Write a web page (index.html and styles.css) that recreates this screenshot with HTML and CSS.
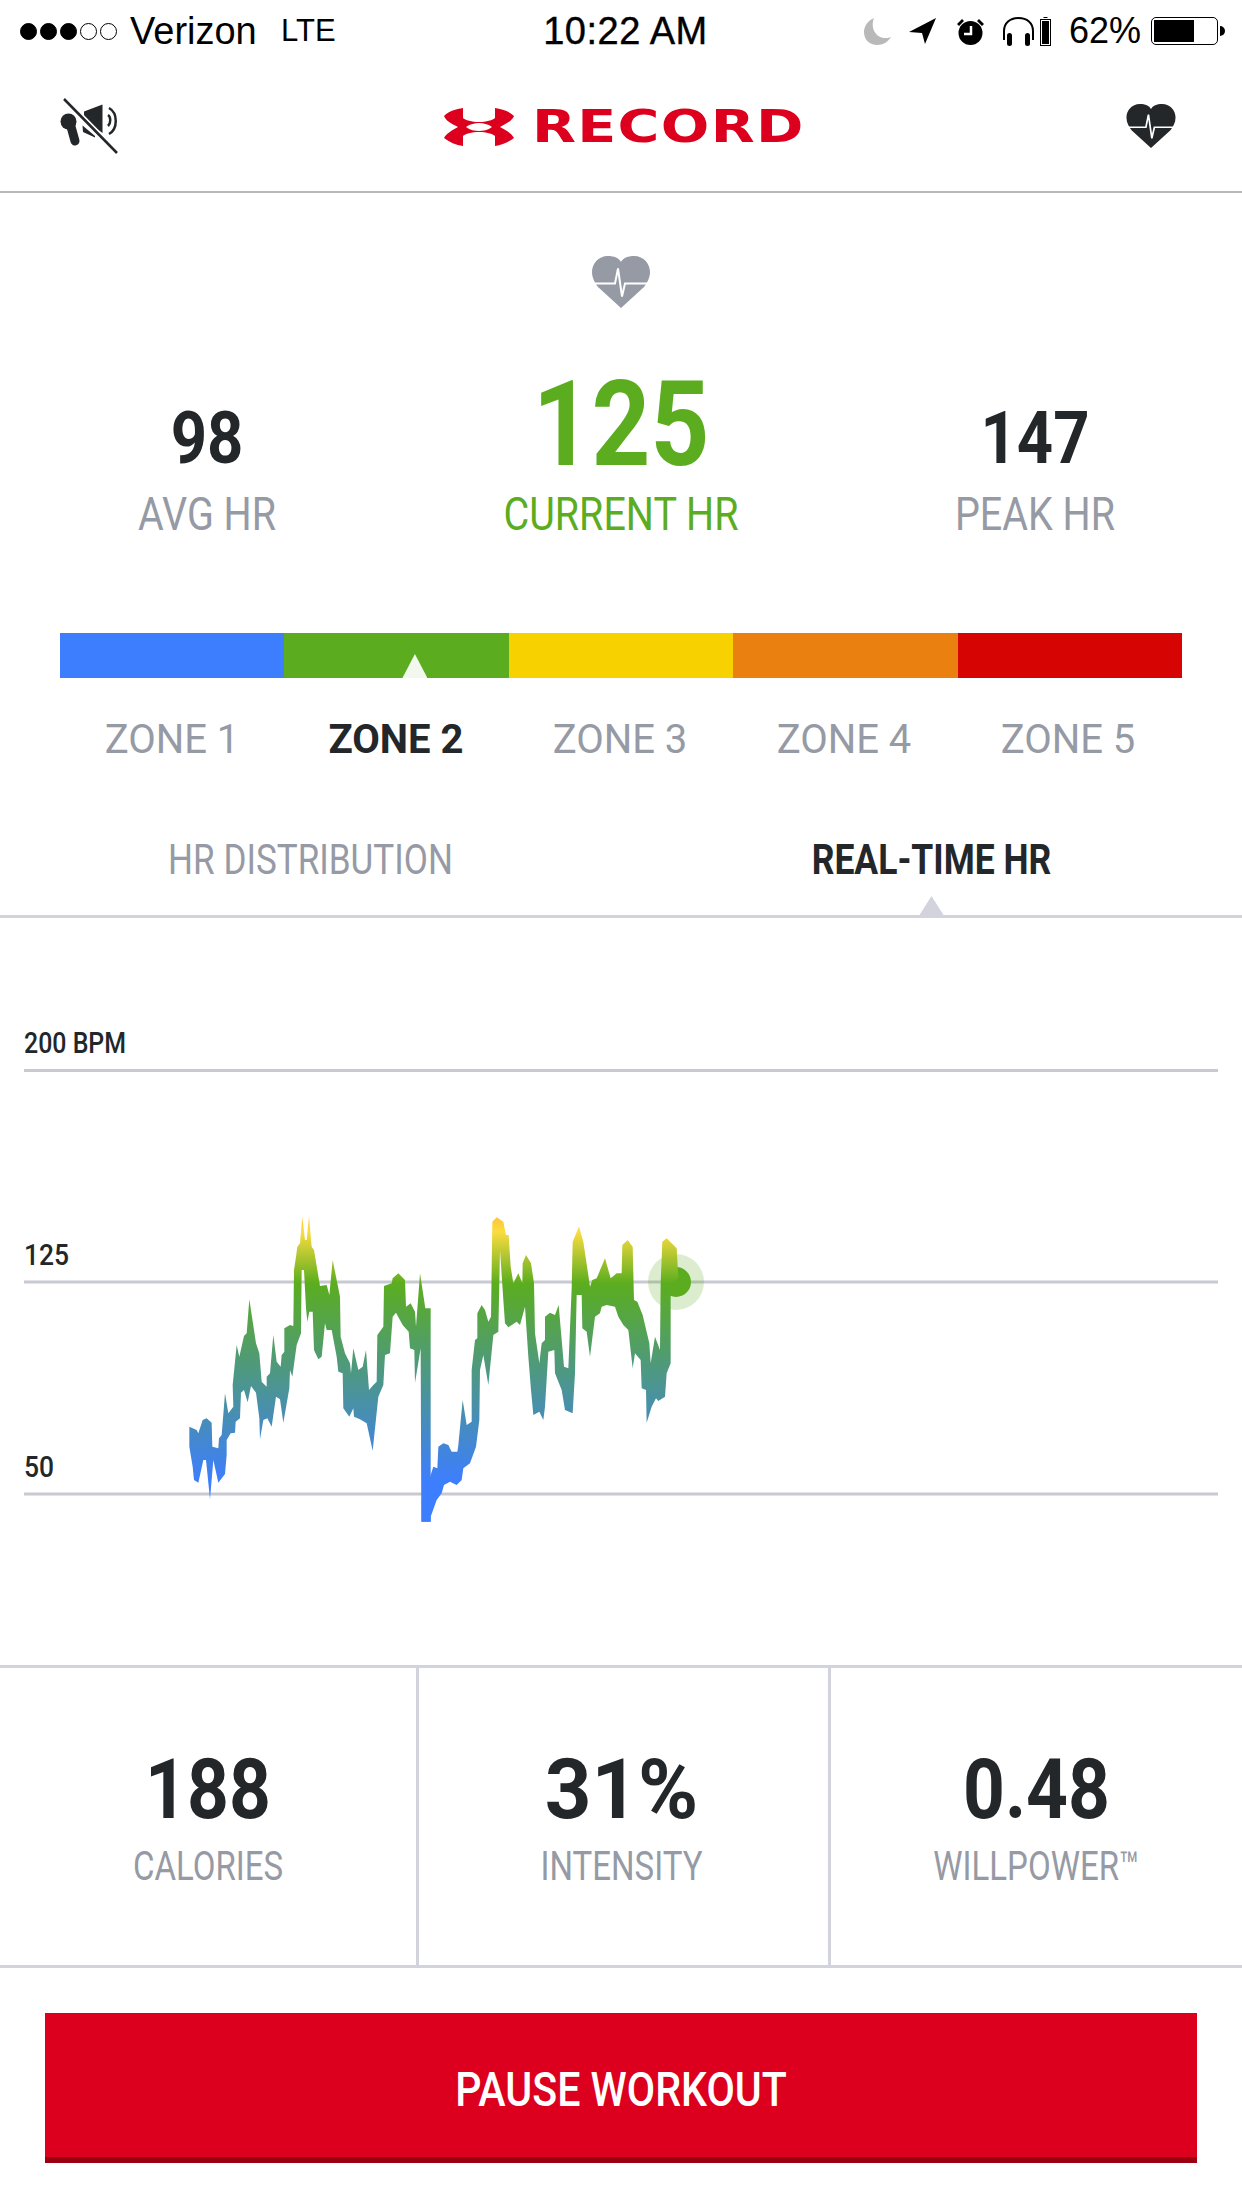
FILE: index.html
```html
<!DOCTYPE html>
<html lang="en">
<head>
<meta charset="utf-8">
<title>UA Record</title>
<link rel="stylesheet" href="styles.css">
</head>
<body>
<svg class="defs" width="0" height="0" aria-hidden="true">
  <symbol id="heart" viewBox="0 0 58 52">
    <path fill="currentColor" d="M29 6C27 2 22 0 16 0 6 0 0 8 0 16c0 6 3 11 6 15l23 21 23-21c3-4 6-9 6-15C58 8 52 0 42 0 36 0 31 2 29 6Z"/>
    <path fill="none" stroke="#fff" stroke-width="2" d="M0 27.500h23l3-15 4 28 3-13h25"/>
  </symbol>
</svg>
<div class="page">
  <div class="status">
    <div class="st-left">
      <span class="dots"><i class="dot on"></i><i class="dot on"></i><i class="dot on"></i><i class="dot"></i><i class="dot"></i></span>
      <span class="carrier">Verizon</span>
      <span class="lte">LTE</span>
    </div>
    <div class="st-time">10:22 AM</div>
    <div class="st-right">
      <svg class="ic-moon" viewBox="0 0 27 27"><path fill="#b9b9b9" d="M10 0C3 3 0 9 0 14c0 8 6 13 13 13 6 0 11-3 14-8-2 1-4 1-6 1C12 20 6 10 10 0Z"/></svg>
      <svg class="ic-arrow" viewBox="0 0 27 26"><path d="M27 0 0 14l13 1 3 11Z"/></svg>
      <svg class="ic-clock" viewBox="0 0 29 27"><circle cx="14.500" cy="15" r="12"/><path d="M1 6 6 1l2 2-5 5ZM28 6l-5-5-2 2 5 5Z"/><path fill="none" stroke="#fff" stroke-width="2.500" d="M15 8v8H8"/></svg>
      <svg class="ic-phones" viewBox="0 0 33 30"><path fill="none" stroke="#000" stroke-width="2" d="M2 24V15C2 7 8 2 16.500 2S31 7 31 15v9"/><rect x="5" y="17" width="5" height="13" rx="2.500"/><rect x="23" y="17" width="5" height="13" rx="2.500"/></svg>
      <svg class="ic-mini" viewBox="0 0 11 29"><rect x="3.500" y="0" width="4" height="1"/><rect x=".5" y="2.500" width="10" height="26" fill="#fff" stroke="#000"/><rect x="2" y="4" width="7" height="23"/></svg>
      <span class="pct">62%</span>
      <span class="battery"><span class="battery-fill"></span></span>
      <span class="battery-nub"></span>
    </div>
  </div>

  <header class="head">
    <svg class="ic-mute" viewBox="0 0 62 56">
      <circle fill="#23272a" cx="8.500" cy="23.500" r="8"/>
      <path fill="none" stroke="#23272a" stroke-width="9" stroke-linecap="round" d="M10 25l5 18"/>
      <path fill="#23272a" d="M24 13.500 42.500 6.500V35L24 22ZM22.500 27.500 35 38v1.500L23 34Z"/>
      <path fill="none" stroke="#23272a" stroke-width="2.500" d="M48 17c3 2 3 8 0 11M49 10c9 5 9 21 0 26"/>
      <path fill="none" stroke="#fff" stroke-width="6" d="M4 1l53 54"/>
      <path fill="none" stroke="#23272a" stroke-width="2.500" d="M4 1l53 54"/>
    </svg>
    <div class="logo">
      <svg class="ua" viewBox="0 0 70 38"><path fill="#dc001e" d="M19 0C12 1 5 3 0 8c2 5 8 8 14 11C8 22 2 26 0 30c5 4 12 7 19 8V28c2-2 9-4 16-4s14 2 16 4v10c7-1 14-4 19-8-2-4-8-8-14-11 6-3 12-6 14-11-5-5-12-7-19-8v10c-2 2-9 4-16 4s-14-2-16-4Z"/><path fill="#fff" d="M22 19c4-3 9-4 13-4s9 1 13 4c-4 3-9 4-13 4s-9-1-13-4Z"/></svg>
      <span class="word">RECORD</span>
    </div>
    <svg class="ic-heart"><use href="#heart"/></svg>
  </header>

  <section class="hr">
    <svg class="ic-heart-grey"><use href="#heart"/></svg>
    <div class="hr-stats">
      <div class="hr-stat"><div class="hr-val">98</div><div class="hr-lab">AVG HR</div></div>
      <div class="hr-stat hr-now"><div class="hr-val">125</div><div class="hr-lab">CURRENT HR</div></div>
      <div class="hr-stat"><div class="hr-val">147</div><div class="hr-lab">PEAK HR</div></div>
    </div>
  </section>

  <section class="zones">
    <div class="zone-bar">
      <div class="seg seg-1"></div>
      <div class="seg seg-2"><span class="marker"></span></div>
      <div class="seg seg-3"></div>
      <div class="seg seg-4"></div>
      <div class="seg seg-5"></div>
    </div>
    <div class="zone-labels">
      <span>ZONE 1</span><span class="active">ZONE 2</span><span>ZONE 3</span><span>ZONE 4</span><span>ZONE 5</span>
    </div>
  </section>

  <nav class="tabs">
    <div class="tab"><span class="tab-text">HR DISTRIBUTION</span></div>
    <div class="tab tab-on"><span class="tab-text">REAL-TIME HR</span></div>
  </nav>

  <section class="chart">
    <svg class="chart-svg" viewBox="0 918 1242 747">
      <defs>
        <linearGradient id="band" gradientUnits="userSpaceOnUse" x1="0" x2="0" y1="50" y2="965">
          <stop offset="0" stop-color="#fdc43a"/>
          <stop offset=".05" stop-color="#fbdc3f"/>
          <stop offset=".219" stop-color="#5bad1f"/>
          <stop offset=".87" stop-color="#3d7eff"/>
          <stop offset="1" stop-color="#3d7eff"/>
        </linearGradient>
      </defs>
      <text class="axis" x="24" y="1053" textLength="102" lengthAdjust="spacingAndGlyphs">200 BPM</text>
      <text class="axis" x="24" y="1265" textLength="45" lengthAdjust="spacingAndGlyphs">125</text>
      <text class="axis" x="24" y="1477" textLength="30" lengthAdjust="spacingAndGlyphs">50</text>
      <path class="grid" d="M24 1070.500H1218M24 1282H1218M24 1494H1218"/>
      <circle class="halo" cx="676" cy="1282" r="28"/>
      <circle class="core" cx="676" cy="1282" r="15"/>
      <g transform="translate(170 1200) scale(.33333)">
        <path fill="url(#band)" d="M58 680 80 690 85 700 98 660 110 655 125 668 127 740 145 745 147 715 155 705 165 580 175 640 190 620 188 555 200 435 208 470 222 408 230 400 238 298 258 430 268 460 275 545 290 560 290 530 300 520 310 405 320 485 332 500 335 465 343 455 343 385 360 375 370 378 372 210 378 170 382 140 390 130 397 50 405 120 410 120 417 50 425 140 432 150 450 258 470 255 478 285 488 180 510 290 512 410 525 460 540 490 543 520 550 445 565 510 578 500 588 450 597 570 610 555 620 545 622 405 640 380 642 258 665 250 668 235 685 220 705 240 708 320 722 310 735 335 738 380 750 220 766 325 782 325 782 965 754 965 752 445 735 548 733 450 720 445 716 395 698 375 678 338 668 350 660 460 645 465 640 555 625 590 608 752 590 670 570 658 552 650 550 625 538 650 520 625 518 520 505 515 500 470 485 390 470 390 465 370 455 470 445 478 432 450 428 335 418 335 412 365 408 325 402 210 395 210 393 400 380 435 367 530 360 510 358 565 340 668 330 598 318 590 305 680 292 655 280 660 270 718 268 655 258 578 243 558 233 607 222 570 213 578 210 655 197 665 195 698 182 700 170 720 170 765 165 822 145 848 130 780 120 898 108 780 100 780 85 848 72 840 68 800 58 740Z"/>
      </g>
      <g transform="translate(420 1200) scale(.33333)">
        <path fill="url(#band)" d="M32 825 40 800 52 805 55 740 70 730 85 735 95 755 112 755 115 735 128 600 140 675 155 665 155 510 165 420 172 415 172 340 185 315 195 330 205 365 213 350 217 65 230 52 250 65 258 105 266 105 272 200 280 250 295 220 307 250 308 190 318 165 333 190 342 250 345 400 358 490 365 430 375 420 375 350 390 338 405 345 416 315 432 500 445 505 455 265 458 125 477 80 490 125 510 260 517 240 530 235 555 175 572 235 590 220 605 220 607 135 623 120 638 140 642 300 652 305 668 345 688 430 692 490 705 410 720 450 722 250 727 125 740 115 770 145 775 235 752 250 752 490 740 520 735 590 715 603 708 595 695 620 680 668 678 570 665 565 662 480 645 460 638 505 625 390 610 375 595 350 585 320 560 315 545 320 540 340 525 350 510 470 500 395 487 385 485 285 470 285 465 520 458 640 435 630 425 570 405 520 403 450 385 455 375 620 370 660 358 635 340 645 333 570 325 470 315 320 300 375 290 365 265 382 255 370 250 300 240 150 235 395 220 405 205 555 190 465 180 510 178 660 168 740 150 790 130 805 125 840 110 855 90 845 72 855 65 880 50 900 32 950 32 965 5 965 5 900 32 825Z"/>
      </g>
    </svg>
  </section>

  <section class="totals">
    <div class="total"><div class="total-val">188</div><div class="total-lab">CALORIES</div></div>
    <div class="total total-mid"><div class="total-val total-val-wide">31%</div><div class="total-lab">INTENSITY</div></div>
    <div class="total"><div class="total-val">0.48</div><div class="total-lab">WILLPOWER™</div></div>
  </section>

  <div class="action"><button class="pause" type="button"><span class="pause-text">PAUSE WORKOUT</span></button></div>
</div>
</body>
</html>
```

FILE: styles.css
```css
* { box-sizing: border-box; }
html, body { margin: 0; padding: 0; background: #fff; }
.defs { position: absolute; }
.page {
  width: 1242px;
  height: 2208px;
  overflow: hidden;
  display: flex;
  flex-direction: column;
  font-family: Roboto, sans-serif;
  color: #23272a;
}

/* status bar */
.status {
  height: 60px;
  padding: 2px 17px 0 20px;
  display: flex;
  align-items: center;
  font-family: "Liberation Sans", Arial, sans-serif;
  font-size: 35px;
  color: #000;
}
.st-left { width: 524px; display: flex; align-items: center; }
.dots { display: flex; gap: 3px; width: 110px; }
.dot { width: 17px; height: 17px; border-radius: 50%; border: 1.500px solid #000; display: block; }
.dot.on { background: #000; }
.carrier { width: 151px; font-size: 38px; }
.lte { font-size: 31px; }
.st-time { width: 166px; font-size: 38px; white-space: nowrap; letter-spacing: .5px; -webkit-text-stroke: .4px #000; }
.st-right { flex: 1; display: flex; align-items: center; padding-left: 155px; position: relative; }
.st-right svg { display: block; flex: none; }
.ic-moon { width: 27px; height: 27px; }
.ic-arrow { width: 27px; height: 26px; margin-left: 18px; }
.ic-clock { width: 29px; height: 27px; margin-left: 20px; }
.ic-phones { width: 33px; height: 30px; margin-left: 17px; }
.ic-mini { width: 11px; height: 29px; margin-left: 5px; }
.pct { margin-left: 18px; font-size: 36px; }
.battery { width: 67px; height: 28px; border: 1.500px solid #000; border-radius: 5px; margin-left: 10px; padding: 2px; display: block; flex: none; }
.battery-fill { display: block; width: 40px; height: 100%; background: #000; }
.battery-nub { width: 5px; height: 10px; background: #000; border-radius: 0 5px 5px 0; margin-left: 2px; flex: none; }

/* header */
.head {
  height: 133px;
  border-bottom: 2px solid #b9b9b9;
  padding: 0 66px 0 60px;
  display: flex;
  align-items: center;
  justify-content: space-between;
}
.ic-mute { width: 62px; height: 56px; display: block; }
.logo { display: flex; align-items: center; gap: 18px; margin-right: 6px; padding-top: 2px; }
.ua { width: 70px; height: 38px; display: block; }
.word {
  display: block;
  width: 267px;
  font-family: "DejaVu Sans", sans-serif;
  font-weight: 700;
  font-size: 45px;
  line-height: 38px;
  color: #dc001e;
  letter-spacing: 1px;
  transform: scaleX(1.27);
  transform-origin: left center;
}
.ic-heart { width: 50px; height: 44px; display: block; color: #23272a; }

/* heart rate */
.hr { padding-top: 63px; display: flex; flex-direction: column; align-items: center; }
.ic-heart-grey { width: 58px; height: 52px; display: block; color: #969aa5; }
.hr-stats { width: 100%; display: grid; grid-template-columns: repeat(3, 1fr); align-items: end; margin-top: 58px; }
.hr-stat { text-align: center; }
.hr-val { font-weight: 700; font-size: 72px; line-height: 76px; transform: scaleX(.88); }
.hr-now .hr-val { font-size: 118px; line-height: 118px; color: #5bad1f; transform: scaleX(.87); }
.hr-lab { font-size: 47px; line-height: 50px; margin-top: 12px; color: #969aa5; transform: scaleX(.84); }
.hr-now .hr-lab { color: #5bad1f; margin-top: 5px; }

/* zones */
.zones { padding: 0 60px; margin-top: 94px; }
.zone-bar { display: flex; height: 45px; }
.seg { flex: 1; position: relative; }
.seg-1 { background: #3d7eff; }
.seg-2 { background: #5bad1f; }
.seg-3 { background: #f7d100; }
.seg-4 { background: #ea800f; }
.seg-5 { background: #d60503; }
.marker {
  position: absolute;
  left: 118px;
  bottom: 0;
  width: 25px;
  height: 24px;
  background: #f2f8ee;
  clip-path: polygon(50% 0, 100% 100%, 0 100%);
}
.zone-labels { display: grid; grid-template-columns: repeat(5, 1fr); margin: 39px 2px 0 0; text-align: center; font-size: 40px; line-height: 46px; color: #969aa5; }
.zone-labels .active { color: #23272a; font-weight: 700; }

/* tabs */
.tabs { display: grid; grid-template-columns: 1fr 1fr; margin-top: 66px; height: 89px; border-bottom: 3px solid #d2d3dc; text-align: center; }
.tab { position: relative; }
.tab-text { display: block; font-size: 43px; line-height: 60px; color: #969aa5; transform: scaleX(.815); }
.tab-on .tab-text { color: #23272a; font-weight: 700; transform: scaleX(.825); }
.tab-on::after {
  content: "";
  position: absolute;
  left: 50%;
  bottom: 0;
  width: 24px;
  height: 19px;
  margin-left: -12px;
  background: #d2d3dc;
  clip-path: polygon(50% 0, 100% 100%, 0 100%);
}

/* chart */
.chart { height: 747px; }
.chart-svg { display: block; width: 1242px; height: 747px; }
.axis { font-family: Roboto, sans-serif; font-size: 29px; font-weight: 500; fill: #23272a; }
.grid { fill: none; stroke: #c8c9d1; stroke-width: 3; }
.halo { fill: #5bad1f; fill-opacity: .22; }
.core { fill: #5bad1f; }

/* totals */
.totals { display: grid; grid-template-columns: 419px 412px 411px; height: 303px; border-top: 3px solid #d2d3dc; border-bottom: 3px solid #d2d3dc; }
.total { text-align: center; padding-top: 80px; border-right: 3px solid #d2d3dc; }
.total:last-child { border-right: 0; }
.total-mid { padding-right: 4px; }
.total-val { font-weight: 700; font-size: 84px; line-height: 84px; transform: scaleX(.87); }
.total-val-wide { transform: scaleX(.97); }
.total-lab { font-size: 40px; line-height: 46px; margin-top: 12px; color: #969aa5; transform: scaleX(.825); }

/* action */
.action { padding: 45px 45px 0; }
.pause {
  display: block;
  width: 100%;
  height: 150px;
  border: 0;
  border-bottom: 6px solid #9a0012;
  background: #dc001e;
  color: #fff;
  font-family: Roboto, sans-serif;
  padding: 8px 0 0;
}
.pause-text { display: block; font-weight: 500; font-size: 49px; transform: scaleX(.84); }
```
